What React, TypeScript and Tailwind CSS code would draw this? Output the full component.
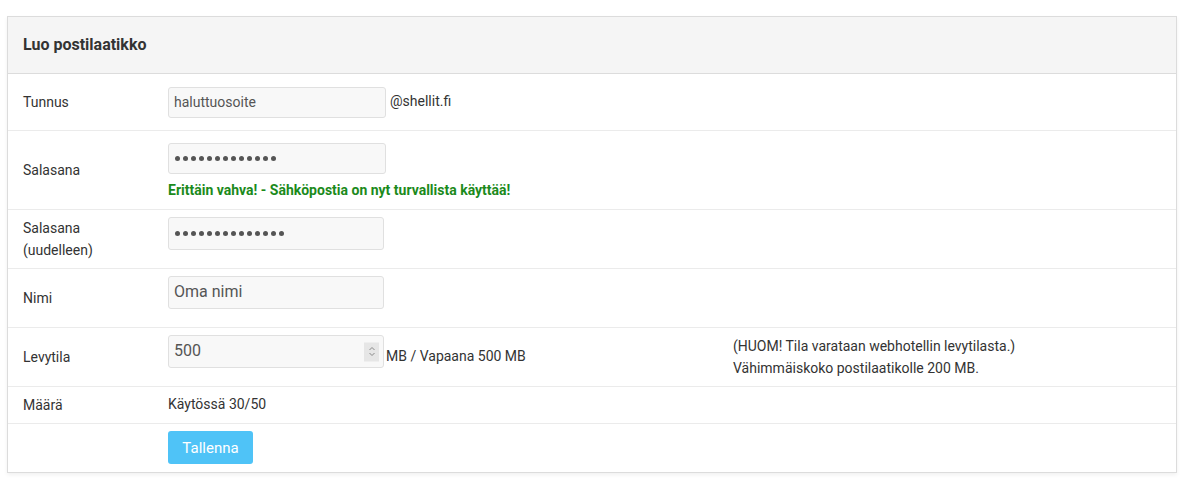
import React from "react";

const Dots = ({ count }: { count: number }) => (
  <div className="flex items-center gap-[3px]">
    {Array.from({ length: count }).map((_, i) => (
      <span key={i} className="h-[5px] w-[5px] rounded-full bg-[#555]" />
    ))}
  </div>
);

const Spinner = () => (
  <div className="absolute right-[5px] top-1/2 flex h-[19px] w-[15px] -translate-y-1/2 items-center justify-center bg-[#e6e6e6]">
    <svg width="8" height="12" viewBox="0 0 8 12" fill="none">
      <path d="M1.5 4.5L4 2L6.5 4.5" stroke="#888" strokeWidth="1" />
      <path d="M1.5 7.5L4 10L6.5 7.5" stroke="#888" strokeWidth="1" />
    </svg>
  </div>
);

const App = () => {
  return (
    <div
      className="min-h-screen bg-white pt-[16px] pl-[7px] pr-[9px] text-[14px] leading-[22px] text-[#333]"
      style={{ fontFamily: "Roboto, 'Liberation Sans', sans-serif" }}
    >
      <div className="border border-[#dcdcdc] bg-white shadow-[0_2px_4px_rgba(0,0,0,0.06)]">
        {/* header */}
        <div className="flex h-[57px] items-center border-b border-[#dcdcdc] bg-[#f5f5f5] pl-[15px]">
          <h2 className="text-[16px] font-bold text-[#333]">Luo postilaatikko</h2>
        </div>

        {/* Tunnus */}
        <div className="flex h-[57px] items-center border-b border-[#ebebeb]">
          <div className="w-[160px] pl-[15px]">Tunnus</div>
          <div className="flex items-center">
            <input
              readOnly
              defaultValue="haluttuosoite"
              className="h-[31px] w-[218px] rounded-[3px] border border-[#e0e0e0] bg-[#f8f8f8] px-[5px] text-[14px] text-[#555] outline-none"
            />
            <span className="ml-[4px] -mt-[2px]">@shellit.fi</span>
          </div>
        </div>

        {/* Salasana */}
        <div className="flex h-[79px] items-center border-b border-[#ebebeb]">
          <div className="w-[160px] pl-[15px]">Salasana</div>
          <div className="flex flex-col self-start pt-[12px]">
            <div className="flex h-[31px] w-[218px] items-center rounded-[3px] border border-[#e0e0e0] bg-[#f8f8f8] px-[6px]">
              <Dots count={13} />
            </div>
            <div className="mt-[5px] text-[14px] font-bold leading-[22px] text-[#1b8a1b]">
              Erittäin vahva! - Sähköpostia on nyt turvallista käyttää!
            </div>
          </div>
        </div>

        {/* Salasana (uudelleen) */}
        <div className="flex h-[59px] items-center border-b border-[#ebebeb]">
          <div className="w-[160px] pl-[15px]">
            Salasana
            <br />
            (uudelleen)
          </div>
          <div className="self-start pt-[7px]">
            <div className="flex h-[33px] w-[216px] items-center rounded-[3px] border border-[#e0e0e0] bg-[#f8f8f8] px-[6px]">
              <Dots count={14} />
            </div>
          </div>
        </div>

        {/* Nimi */}
        <div className="flex h-[59px] items-center border-b border-[#ebebeb]">
          <div className="w-[160px] pl-[15px]">Nimi</div>
          <div className="self-start pt-[7px]">
            <input
              readOnly
              defaultValue="Oma nimi"
              className="h-[33px] w-[216px] rounded-[3px] border border-[#e0e0e0] bg-[#f8f8f8] px-[5px] pb-[2px] text-[16px] text-[#555] outline-none"
            />
          </div>
        </div>

        {/* Levytila */}
        <div className="flex h-[59px] items-center border-b border-[#ebebeb]">
          <div className="w-[160px] pl-[15px]">Levytila</div>
          <div className="flex w-[565px] self-start pt-[7px]">
            <div className="relative">
              <input
                readOnly
                defaultValue="500"
                className="h-[33px] w-[216px] rounded-[3px] border border-[#e0e0e0] bg-[#f8f8f8] px-[5px] pb-[2px] text-[16px] text-[#555] outline-none"
              />
              <Spinner />
            </div>
            <span className="ml-[2px] pt-[10px]">MB / Vapaana 500 MB</span>
          </div>
          <div className="leading-[22px]">
            (HUOM! Tila varataan webhotellin levytilasta.)
            <br />
            Vähimmäiskoko postilaatikolle 200 MB.
          </div>
        </div>

        {/* Määrä */}
        <div className="flex h-[37px] items-center border-b border-[#ebebeb]">
          <div className="w-[160px] pl-[15px]">Määrä</div>
          <div className="-mt-[2px]">Käytössä 30/50</div>
        </div>

        {/* save */}
        <div className="flex h-[48px] items-start pt-[7px] pl-[160px]">
          <button className="h-[33px] w-[85px] rounded-[3px] bg-[#4fc3f7] text-[15px] text-white">
            Tallenna
          </button>
        </div>
      </div>
    </div>
  );
};

export default App;
